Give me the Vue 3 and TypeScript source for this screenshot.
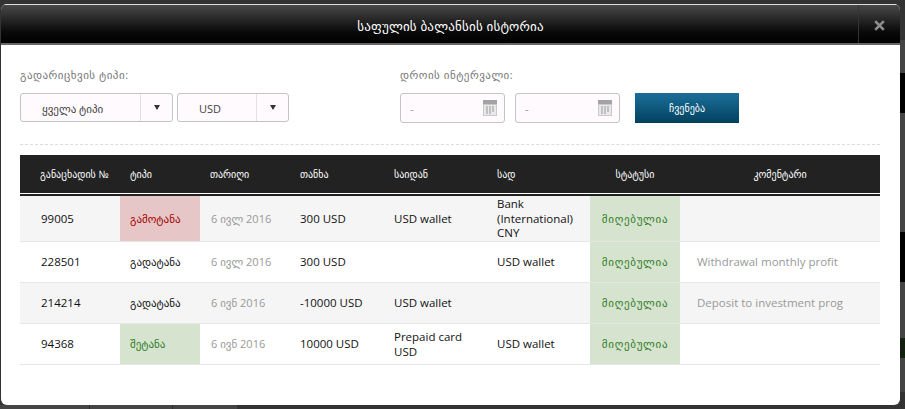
<script setup lang="ts">
interface Row {
  id: string
  type: string
  typeClass: string
  date: string
  amount: string
  from: string
  to: string
  comment: string
}

const columns = ['განაცხადის №', 'ტიპი', 'თარიღი', 'თანხა', 'საიდან', 'სად', 'სტატუსი', 'კომენტარი']

const rows: Row[] = [
  { id: '99005', type: 'გამოტანა', typeClass: 'out', date: '6 ივლ 2016', amount: '300 USD', from: 'USD wallet', to: 'Bank (International) CNY', comment: '' },
  { id: '228501', type: 'გადატანა', typeClass: '', date: '6 ივლ 2016', amount: '300 USD', from: '', to: 'USD wallet', comment: 'Withdrawal monthly profit' },
  { id: '214214', type: 'გადატანა', typeClass: '', date: '6 ივნ 2016', amount: '-10000 USD', from: 'USD wallet', to: '', comment: 'Deposit to investment prog' },
  { id: '94368', type: 'შეტანა', typeClass: 'in', date: '6 ივნ 2016', amount: '10000 USD', from: 'Prepaid card USD', to: 'USD wallet', comment: '' },
]
</script>

<template>
  <div class="page">
    <div class="modal">
      <header class="modal-head">
        <h1 class="modal-title">საფულის ბალანსის ისტორია</h1>
        <button class="close">
          <svg width="11" height="11" viewBox="0 0 11 11"><path d="M1.2 1.2l8.6 8.6M9.8 1.2l-8.6 8.6" stroke="#8e8e8e" stroke-width="2.6" /></svg>
        </button>
      </header>

      <div class="modal-body">
        <div class="filters">
          <div class="group group-type">
            <label class="label">გადარიცხვის ტიპი:</label>
            <div class="controls">
              <div class="select select-type">
                <span class="select-value">ყველა ტიპი</span>
                <span class="select-arrow"><i></i></span>
              </div>
              <div class="select select-cur">
                <span class="select-value">USD</span>
                <span class="select-arrow"><i></i></span>
              </div>
            </div>
          </div>
          <div class="group">
            <label class="label">დროის ინტერვალი:</label>
            <div class="controls date-controls">
              <div v-for="n in 2" :key="n" class="date">
                <span>-</span>
                <svg width="14" height="16" viewBox="0 0 14 16">
                  <rect x="0" y="0" width="14" height="16" fill="#c9c9c9" />
                  <rect x="0" y="0" width="14" height="4" fill="#a3a3a3" />
                  <rect x="1" y="5" width="12" height="10" fill="#e8e8e8" />
                  <path d="M3 7h8M3 9h8M3 11h8M3 13h5" stroke="#9a9a9a" stroke-width="1" stroke-dasharray="2 1" />
                </svg>
              </div>
              <button class="show">ჩვენება</button>
            </div>
          </div>
        </div>

        <table class="history">
          <thead>
            <tr>
              <th v-for="c in columns" :key="c">{{ c }}</th>
            </tr>
          </thead>
          <tbody>
            <tr v-for="r in rows" :key="r.id">
              <td>{{ r.id }}</td>
              <td class="type" :class="r.typeClass">{{ r.type }}</td>
              <td class="date-cell">{{ r.date }}</td>
              <td>{{ r.amount }}</td>
              <td>{{ r.from }}</td>
              <td>{{ r.to }}</td>
              <td class="status">მიღებულია</td>
              <td class="comment">{{ r.comment }}</td>
            </tr>
          </tbody>
        </table>
      </div>
    </div>
  </div>
</template>

<style>
html, body {
  margin: 0;
  background: #333;
}
</style>

<style scoped>
.page {
  width: 905px;
  height: 409px;
  box-sizing: border-box;
  padding: 4px 5px 4px 1px;
  overflow: hidden;
  background-color: #333;
  /* dimmed page showing behind the modal */
  background-image:
    linear-gradient(#333 40px, #444 40px, #444 73px, #000 73px, #000 113px, #444 113px, #444 232px, #000 232px, #000 282px, #444 282px, #444 338px, #12200f 338px, #12200f 358px, #444 358px, #444 392px, #333 392px),
    linear-gradient(to right, #444 89px, #2e2e2e 89px, #2e2e2e 90px, #444 90px, #444 172px, #2e2e2e 172px, #2e2e2e 173px, #444 173px, #444 237px, #333 237px);
  background-size: 5px 100%, 100% 4px;
  background-position: right top, left bottom;
  background-repeat: no-repeat;
  font-family: "Open Sans", "DejaVu Sans", sans-serif;
  font-size: 11.5px;
  color: #111;
}

.modal {
  height: 401px;
  background: #fff;
  border-radius: 6px;
  overflow: hidden;
}

.modal-head {
  position: relative;
  height: 41px;
  box-sizing: border-box;
  display: flex;
  align-items: center;
  justify-content: center;
  padding-top: 3px;
  background: linear-gradient(#484848 0%, #0a0a0a 70%, #000 100%);
  border-top: 1px solid #ddd;
  border-bottom: 2px solid #666;
}

.modal-title {
  margin: 0;
  font-size: 13px;
  font-weight: 400;
  letter-spacing: 0.2px;
  color: #fff;
}

.close {
  position: absolute;
  top: 0;
  right: 0;
  width: 42px;
  height: 38px;
  padding: 2px 0 0;
  border: 0;
  border-left: 1px solid #333;
  background: transparent;
  display: flex;
  align-items: center;
  justify-content: center;
}

.modal-body {
  padding: 0 20px 0 19px;
}

.filters {
  display: flex;
  height: 100px;
  box-sizing: border-box;
  padding: 22px 0 0;
  border-bottom: 1px dashed #ddd;
}

.group-type {
  width: 380px;
}

.label {
  display: block;
  height: 26px;
  font-size: 11px;
  letter-spacing: 0.5px;
  color: #777;
}

.controls {
  display: flex;
  gap: 4px;
}

.date-controls {
  gap: 10px;
}

.select {
  height: 29px;
  box-sizing: border-box;
  display: flex;
  border: 1px solid #c4c4c4;
  border-radius: 3px;
  background: #fefafe;
  color: #444;
  font-size: 11px;
}

.select-type {
  width: 153px;
}

.select-cur {
  width: 112px;
}

.select-value {
  flex: 1;
  padding-left: 21px;
  line-height: 29px;
}

.select-arrow {
  width: 31px;
  border-left: 1px solid #e4e0e4;
  display: flex;
  align-items: center;
  justify-content: center;
}

.select-arrow i {
  width: 0;
  height: 0;
  border: 3px solid transparent;
  border-top: 5px solid #333;
  border-bottom: 0;
}

.date {
  width: 105px;
  height: 30px;
  box-sizing: border-box;
  display: flex;
  align-items: center;
  justify-content: space-between;
  padding: 0 7px 0 9px;
  border: 1px solid #c4c4c4;
  border-radius: 3px;
  background: #fefafe;
  color: #999;
}

.show {
  width: 104px;
  height: 30px;
  margin-left: 5px;
  padding: 0;
  border: 0;
  background: linear-gradient(#1c6f99, #01415f);
  color: #fff;
  font-family: inherit;
  font-size: 10px;
}

.history {
  width: 860px;
  margin-top: 10px;
  border-collapse: separate;
  border-spacing: 0;
  table-layout: fixed;
}

.history th {
  height: 41px;
  box-sizing: border-box;
  padding: 0 0 3px 10px;
  background: linear-gradient(#222 38px, #fff 38px, #fff 39px, #222 39px);
  color: #fff;
  font-size: 10px;
  font-weight: 400;
  text-align: left;
}

.history th:nth-child(1) { width: 100px; padding-left: 20px; }
.history th:nth-child(2) { width: 80px; }
.history th:nth-child(3) { width: 90px; }
.history th:nth-child(4) { width: 94px; }
.history th:nth-child(5) { width: 103px; }
.history th:nth-child(6) { width: 103px; }
.history th:nth-child(7) { width: 90px; padding-left: 0; text-align: center; }
.history th:nth-child(8) { width: 200px; padding-left: 0; text-align: center; }

.history td {
  padding: 1px 10px 0;
  line-height: 14.5px;
  border-bottom: 1px solid #e6e6e6;
  box-sizing: border-box;
}

.history tbody tr:nth-child(odd) td {
  background: #f5f5f5;
}

.history tbody tr:nth-child(1) td { height: 46px; }
.history tbody tr:nth-child(2) td { height: 41px; }
.history tbody tr:nth-child(3) td { height: 41px; }
.history tbody tr:nth-child(4) td { height: 41px; }

.history td:nth-child(1) { padding-left: 21px; }
.history td:nth-child(8) { padding-left: 17px; padding-right: 0; }

.history td.date-cell {
  color: #999;
  font-size: 11px;
  padding-left: 11px;
}

.history td.type {
  font-size: 11px;
}

.history tbody tr td.out {
  background: #e6c6c6;
  color: #a40000;
}

.history tbody tr td.in {
  background: #d6e3cf;
  color: #2f7d1f;
}

.history tbody tr td.status {
  background: #d6e3cf;
  color: #2f7d1f;
  font-size: 11px;
  letter-spacing: 0.7px;
  padding: 1px 0 0;
  text-align: center;
}

.history td.comment {
  color: #999;
}
</style>
